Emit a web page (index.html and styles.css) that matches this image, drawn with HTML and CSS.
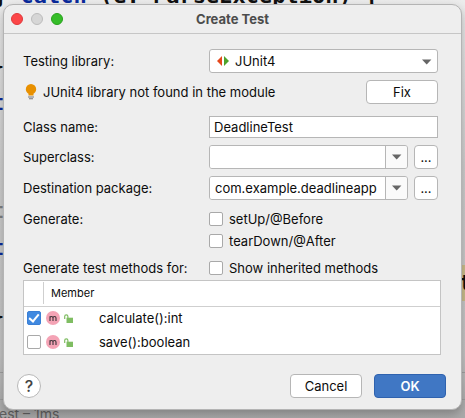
FILE: index.html
```html
<!DOCTYPE html>
<html lang="en">
<head>
<meta charset="utf-8">
<title>Create Test</title>
<meta name="viewport" content="width=device-width, initial-scale=1">
<link rel="stylesheet" href="styles.css">
</head>
<body>
<div class="editor" aria-hidden="true">
  <div class="code code-top">} <b>catch</b> (e: ParseException) {</div>
  <div class="code code-a">}</div>
  <div class="code code-b keyword">t</div>
  <div class="code code-c muted">t</div>
  <div class="code code-d keyword">t</div>
  <div class="code code-e">}</div>
  <div class="code code-mark">t</div>
  <div class="toolstrip"></div>
  <div class="status">est – 1ms</div>
</div>

<main class="dialog" role="dialog" aria-labelledby="title">
  <header class="titlebar">
    <div class="lights">
      <button class="light close" aria-label="Close"></button>
      <button class="light minimize" aria-label="Minimize"></button>
      <button class="light expand" aria-label="Zoom"></button>
    </div>
    <h1 id="title">Create Test</h1>
  </header>

  <form class="content">
    <div class="fields">
      <div class="row">
        <label for="library">Testing library:</label>
        <div class="select-wrap">
          <select id="library"><option>JUnit4</option><option>JUnit5</option></select>
          <svg class="junit" viewBox="0 0 12 12" width="12" height="12"><path d="M5 1v10L0 6z" fill="#e5481c"/><path d="M7 1v10l5-5z" fill="#4fa32c"/></svg>
          <svg class="caret" viewBox="0 0 10 6" width="10" height="6"><path d="M0 .5h9.4L4.7 5.5z" fill="#666"/></svg>
        </div>
      </div>

      <div class="notice">
        <svg viewBox="0 0 16 16" width="16" height="16"><path d="M8 0a5.200 5.200 0 0 0-5.200 5.200c0 2.300 1.400 3.600 2.700 4.600V11.500h5V9.800c1.300-1 2.700-2.300 2.700-4.600A5.200 5.200 0 0 0 8 0z" fill="#e89000"/><path d="M5 12.400h6v1.100H5zM6 14.300h4v1H6z" fill="#77777a"/></svg>
        <span>JUnit4 library not found in the module</span>
        <button type="button" class="btn">Fix</button>
      </div>

      <div class="row row-class">
        <label for="cls">Class name:</label>
        <input id="cls" class="text" type="text" value="DeadlineTest">
      </div>

      <div class="row row-super">
        <label for="super">Superclass:</label>
        <div class="combo-line">
          <div class="combo">
            <input id="super" type="text" value="">
            <button type="button" aria-label="Recent superclasses"><svg viewBox="0 0 10 6" width="10" height="6"><path d="M0 .5h9.400L4.700 5.500z" fill="#666"/></svg></button>
          </div>
          <button type="button" class="more" aria-label="Browse superclass">...</button>
        </div>
      </div>

      <div class="row row-package">
        <label for="pkg">Destination package:</label>
        <div class="combo-line">
          <div class="combo">
            <input id="pkg" type="text" value="com.example.deadlineapp">
            <button type="button" aria-label="Recent packages"><svg viewBox="0 0 10 6" width="10" height="6"><path d="M0 .5h9.400L4.700 5.500z" fill="#666"/></svg></button>
          </div>
          <button type="button" class="more" aria-label="Browse package">...</button>
        </div>
      </div>

      <div class="row row-generate">
        <span>Generate:</span>
        <div class="checks">
          <label class="check"><input type="checkbox"><span>setUp/@Before</span></label>
          <label class="check"><input type="checkbox"><span>tearDown/@After</span></label>
        </div>
      </div>

      <div class="row row-methods">
        <span>Generate test methods for:</span>
        <label class="check"><input type="checkbox"><span>Show inherited methods</span></label>
      </div>
    </div>

    <div class="members">
      <table>
        <thead>
          <tr><th class="pick"></th><th class="member"><span>Member</span></th></tr>
        </thead>
        <tbody>
          <tr>
            <td class="pick"><input type="checkbox" id="m1" checked></td>
            <td><label for="m1" class="method">
              <svg viewBox="0 0 14 14" width="14" height="14"><circle cx="7" cy="7" r="7" fill="#f4a3b5"/><path d="M4 10V5.200M4 7c0-1.200.6-1.500 1.400-1.500S7 6 7 7v3M7 7c0-1.200.6-1.500 1.500-1.500S10 6 10 7v3" fill="none" stroke="#3d3439" stroke-width="1.100"/></svg>
              <svg viewBox="0 0 9 9" width="9" height="9"><path d="M.7 5V2.500a1.600 1.600 0 0 1 3.200 0V4" fill="none" stroke="#7fbd62" stroke-width="1.200"/><path d="M2.500 3.700H9V9H2.500z" fill="#7fbd62"/></svg>
              <span>calculate():int</span></label></td>
          </tr>
          <tr>
            <td class="pick"><input type="checkbox" id="m2"></td>
            <td><label for="m2" class="method">
              <svg viewBox="0 0 14 14" width="14" height="14"><circle cx="7" cy="7" r="7" fill="#f4a3b5"/><path d="M4 10V5.200M4 7c0-1.200.6-1.500 1.400-1.500S7 6 7 7v3M7 7c0-1.200.6-1.500 1.500-1.500S10 6 10 7v3" fill="none" stroke="#3d3439" stroke-width="1.100"/></svg>
              <svg viewBox="0 0 9 9" width="9" height="9"><path d="M.7 5V2.500a1.600 1.600 0 0 1 3.200 0V4" fill="none" stroke="#7fbd62" stroke-width="1.200"/><path d="M2.500 3.700H9V9H2.500z" fill="#7fbd62"/></svg>
              <span>save():boolean</span></label></td>
          </tr>
        </tbody>
      </table>
    </div>

    <footer class="actions">
      <button type="button" class="help" aria-label="Help">?</button>
      <button type="button" class="btn cancel">Cancel</button>
      <button type="submit" class="btn primary">OK</button>
    </footer>
  </form>
</main>
</body>
</html>
```
FILE: styles.css
```css
* {
  box-sizing: border-box;
}

body {
  margin: 0;
  min-height: 100vh;
  overflow: hidden;
  background: linear-gradient(#ececec, #cfcfcf 40%, #c4c4c4 85%, #a9a9a9);
  color: #0c0c0c;
  font: 13px/16px Inter, "Liberation Sans", sans-serif;
}

button,
input,
select {
  margin: 0;
  color: inherit;
  font: inherit;
}

/* Editor window behind the dialog */
.editor {
  position: absolute;
  inset: 0;
  overflow: hidden;
}

.code {
  position: absolute;
  left: -9px;
  color: #111;
  font: 700 22px/28px "DejaVu Sans Mono", monospace;
  white-space: pre;
}

.code b,
.keyword {
  color: #0a2a9c;
}

.muted {
  color: #808080;
}

.code-top { top: -18px; left: -6px; }
.code-a { top: 52px; }
.code-b { top: 89px; }
.code-c { top: 197px; }
.code-d { top: 234px; }
.code-e { top: 302px; }

.code-mark {
  top: 265px;
  right: 0;
  left: auto;
  width: 6px;
  line-height: 36px;
  background: #cabd8c;
}

.toolstrip {
  position: absolute;
  top: 372px;
  right: 0;
  left: 0;
  height: 28px;
  border: solid #a0a0a0;
  border-width: 1px 0;
}

.status {
  position: absolute;
  top: 406px;
  left: -1px;
  color: #606060;
  font-size: 14px;
}

/* Dialog */
.dialog {
  position: relative;
  margin: 4px 3px 8px;
  border: 1px solid #b4b4b4;
  border-radius: 10px;
  background: #eee;
  box-shadow: 0 4px 10px rgba(0, 0, 0, .25);
}

.titlebar {
  display: grid;
  grid-template-columns: 1fr auto 1fr;
  align-items: center;
  height: 29px;
  padding: 0 7px;
  border-bottom: 1px solid #c6c6c6;
}

.titlebar h1 {
  margin: 0;
  color: #4c4c4c;
  font-size: 13px;
  font-weight: 700;
}

.lights {
  display: flex;
  gap: 8px;
}

.light {
  width: 12px;
  height: 12px;
  padding: 0;
  border: 1px solid #bcbcbc;
  border-radius: 50%;
  background: #d6d6d6;
}

.close {
  border-color: #e0383a;
  background: #fc4648;
}

.expand {
  border-color: #27a11c;
  background: #36bd29;
}

.fields {
  padding: 15px 23px 0 19px;
}

.row {
  display: grid;
  grid-template-columns: 186px minmax(0, 1fr);
  align-items: center;
}

.row-class { margin-top: 12px; }
.row-super { margin-top: 7px; }
.row-package { margin-top: 7px; }
.row-methods { margin-top: 11px; }

.row-generate {
  align-items: start;
  margin-top: 11px;
}

.select-wrap {
  position: relative;
  display: flex;
}

.select-wrap select {
  width: 100%;
  height: 24px;
  padding: 0 24px 0 25px;
  border: 1px solid #b6b6b6;
  border-radius: 3px;
  background: #fff;
  appearance: none;
}

.junit,
.caret {
  position: absolute;
  pointer-events: none;
}

.junit {
  top: 6px;
  left: 8px;
}

.caret {
  top: 10px;
  right: 6px;
}

.notice {
  display: flex;
  gap: 4px;
  align-items: center;
  margin-top: 7px;
}

.notice .btn {
  margin-left: auto;
}

.btn,
.more {
  height: 24px;
  padding: 0;
  border: 1px solid #b6b6b6;
  border-radius: 4px;
  background: #fff;
}

.btn {
  width: 72px;
}

.more {
  flex: none;
  width: 24px;
}

.text {
  width: 100%;
  height: 22px;
  padding: 0 4px;
  border: 1px solid #b6b6b6;
  border-radius: 0;
  background: #fff;
}

.combo-line {
  display: flex;
  gap: 6px;
}

.combo {
  display: flex;
  flex: 1;
  min-width: 0;
  height: 24px;
  border: 1px solid #b6b6b6;
  border-radius: 3px;
  overflow: hidden;
}

.combo input {
  flex: 1;
  min-width: 0;
  padding: 0 5px;
  border: 0;
  background: #fff;
}

.combo button {
  display: grid;
  flex: none;
  place-items: center;
  width: 22px;
  padding: 0;
  border: 0;
  border-left: 1px solid #b6b6b6;
  background: #fafafa;
}

.checks {
  display: grid;
  gap: 6px;
}

.check {
  display: flex;
  gap: 6px;
  align-items: center;
}

input[type="checkbox"] {
  flex: none;
  width: 14px;
  height: 14px;
  border: 1px solid #a9a9a9;
  border-radius: 2px;
  background: #fff;
  appearance: none;
}

input[type="checkbox"]:checked {
  border-color: #3a7fd5;
  background: #4089e0;
}

input[type="checkbox"]:checked::before {
  width: 4px;
  height: 8px;
  margin-bottom: 2px;
  border: solid #fff;
  border-width: 0 2px 2px 0;
  content: "";
  transform: rotate(40deg);
}

/* Member table */
.members {
  margin: 4px 20px 0 19px;
  border: 1px solid #c4c4c4;
  background: #fff;
}

.members table {
  width: 100%;
  border-collapse: collapse;
  table-layout: fixed;
}

.members th,
.members td {
  padding: 0;
  text-align: left;
}

.members th {
  height: 25px;
  border-bottom: 1px solid #cfcfcf;
  font-size: 11px;
  font-weight: 400;
}

.members td {
  height: 24px;
}

.members .pick {
  width: 19px;
  padding-left: 3px;
}

.member span {
  display: block;
  padding: 3px 0 3px 7px;
  border-left: 1px solid #cfcfcf;
}

.members .pick input {
  display: grid;
  place-items: center;
}

.method {
  display: flex;
  align-items: center;
  padding-left: 3px;
}

.method svg + svg {
  margin-left: 4px;
}

.method span {
  margin-left: 26px;
}

.actions {
  display: flex;
  gap: 12px;
  align-items: center;
  padding: 19px 15px 11px 13px;
}

.help {
  width: 24px;
  height: 24px;
  padding: 0;
  border: 1px solid #b8b8b8;
  border-radius: 50%;
  background: #fff;
  color: #444;
  font-size: 16px;
  font-weight: 500;
}

.cancel {
  margin-left: auto;
}

.primary {
  border-color: #2f62ae;
  background: #4077c4;
  color: #fff;
  font-weight: 600;
}
```
